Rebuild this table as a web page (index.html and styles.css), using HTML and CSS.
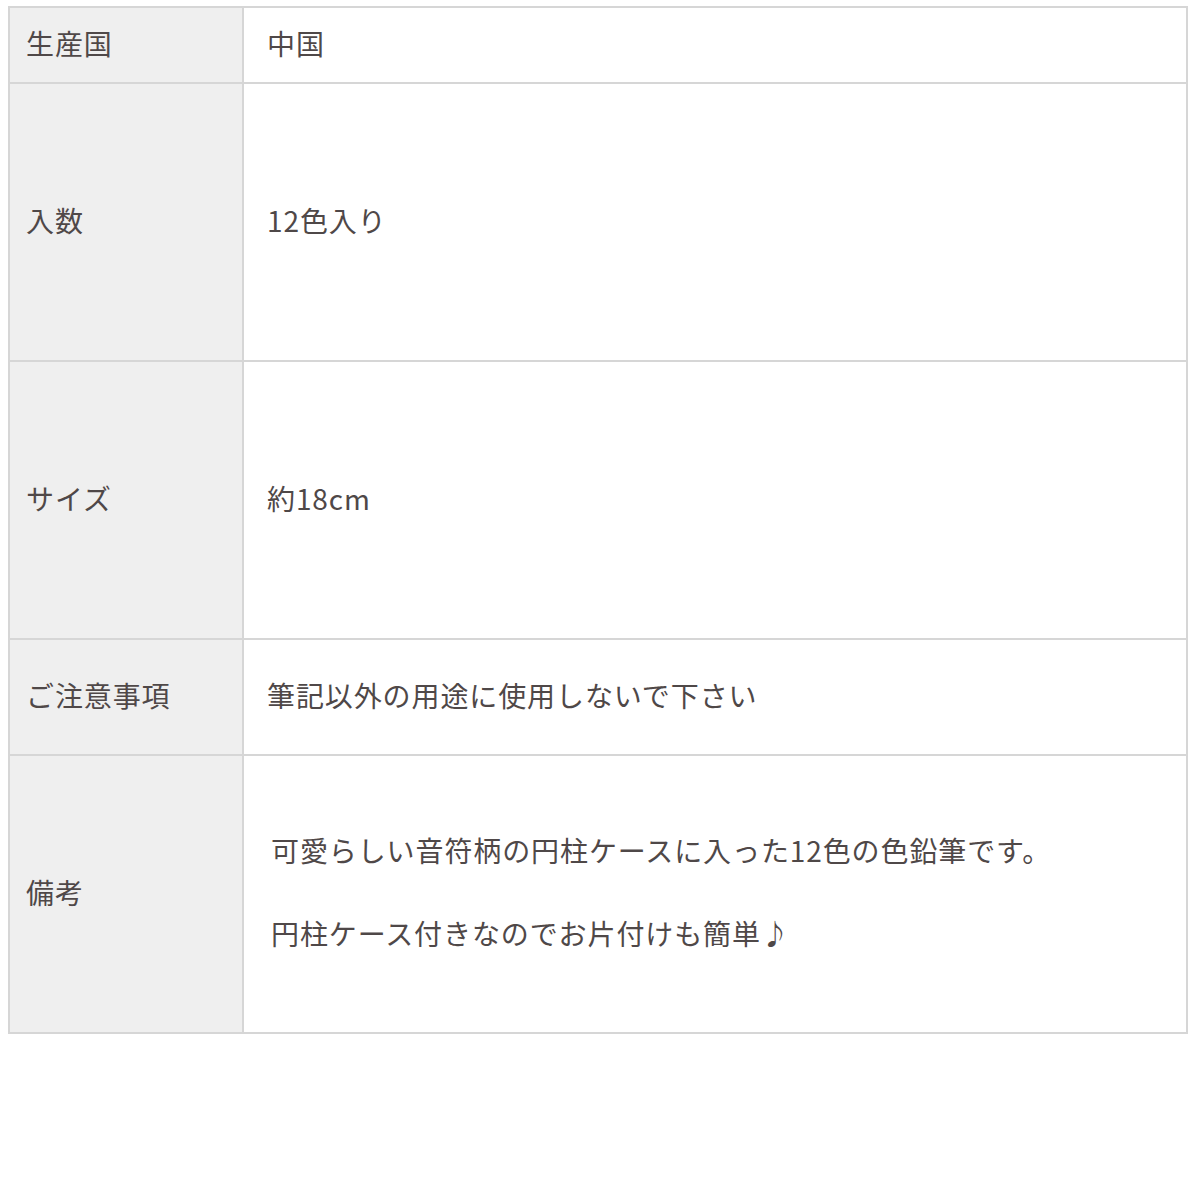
FILE: index.html
```html
<!DOCTYPE html>
<html lang="ja">
<head>
  <meta charset="UTF-8">
  <meta name="viewport" content="width=device-width, initial-scale=1">
  <title>商品仕様</title>
  <link rel="stylesheet" href="styles.css">
</head>
<body>
  <!-- Spec table -->
  <table class="spec">
    <tr class="row-short">
      <th>生産国</th>
      <td>中国</td>
    </tr>
    <tr class="row-tall">
      <th>入数</th>
      <td>12色入り</td>
    </tr>
    <tr class="row-tall">
      <th>サイズ</th>
      <td>約18cm</td>
    </tr>
    <tr class="row-mid">
      <th>ご注意事項</th>
      <td>筆記以外の用途に使用しないで下さい</td>
    </tr>
    <tr class="row-tall">
      <th>備考</th>
      <td class="note">
        <p>可愛らしい音符柄の円柱ケースに入った12色の色鉛筆です。</p>
        <p>円柱ケース付きなのでお片付けも簡単♪</p>
      </td>
    </tr>
  </table>
</body>
</html>
```

FILE: styles.css
```css
body {
  font-family: "Noto Sans CJK JP", "Noto Sans", sans-serif;
  background: #fff;
  margin: 6px 0 0 8px;
  color: #4f4848;
}
.spec {
  width: 1180px;
  border-collapse: collapse;
  table-layout: fixed;
  font-size: 28px;
  letter-spacing: 0.9px;
}
.spec th,
.spec td {
  border: 2px solid #d6d6d6;
  text-align: left;
  vertical-align: middle;
  font-weight: normal;
  padding: 0 0 5px 23px;
}
.spec th {
  width: 216px;
  background-color: #efefef;
  padding-left: 16px;
}
.row-short { height: 76px; }
.row-mid { height: 116px; }
.row-tall { height: 278px; }
.note {
  padding-left: 27px !important;
}
.note p {
  margin: 0;
  line-height: 40px;
}
.note p + p {
  margin-top: 43px;
}
```
